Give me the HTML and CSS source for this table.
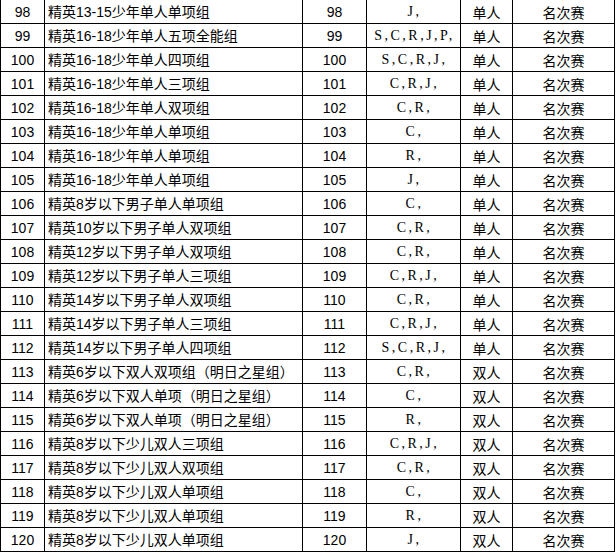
FILE: index.html
```html
<!DOCTYPE html>
<html lang="zh-CN">
<head>
<meta charset="utf-8">
<title>项目列表</title>
<link rel="stylesheet" href="styles.css">
</head>
<body>
<table class="grid">
<colgroup>
<col class="c-no"><col class="c-name"><col class="c-code"><col class="c-items"><col class="c-type"><col class="c-kind">
</colgroup>
<tbody>
<tr><td class="num">98</td><td class="name">精英13-15少年单人单项组</td><td class="num">98</td><td class="items">J,</td><td class="cn">单人</td><td class="cn">名次赛</td></tr>
<tr><td class="num">99</td><td class="name">精英16-18少年单人五项全能组</td><td class="num">99</td><td class="items">S,C,R,J,P,</td><td class="cn">单人</td><td class="cn">名次赛</td></tr>
<tr><td class="num">100</td><td class="name">精英16-18少年单人四项组</td><td class="num">100</td><td class="items">S,C,R,J,</td><td class="cn">单人</td><td class="cn">名次赛</td></tr>
<tr><td class="num">101</td><td class="name">精英16-18少年单人三项组</td><td class="num">101</td><td class="items">C,R,J,</td><td class="cn">单人</td><td class="cn">名次赛</td></tr>
<tr><td class="num">102</td><td class="name">精英16-18少年单人双项组</td><td class="num">102</td><td class="items">C,R,</td><td class="cn">单人</td><td class="cn">名次赛</td></tr>
<tr><td class="num">103</td><td class="name">精英16-18少年单人单项组</td><td class="num">103</td><td class="items">C,</td><td class="cn">单人</td><td class="cn">名次赛</td></tr>
<tr><td class="num">104</td><td class="name">精英16-18少年单人单项组</td><td class="num">104</td><td class="items">R,</td><td class="cn">单人</td><td class="cn">名次赛</td></tr>
<tr><td class="num">105</td><td class="name">精英16-18少年单人单项组</td><td class="num">105</td><td class="items">J,</td><td class="cn">单人</td><td class="cn">名次赛</td></tr>
<tr><td class="num">106</td><td class="name">精英8岁以下男子单人单项组</td><td class="num">106</td><td class="items">C,</td><td class="cn">单人</td><td class="cn">名次赛</td></tr>
<tr><td class="num">107</td><td class="name">精英10岁以下男子单人双项组</td><td class="num">107</td><td class="items">C,R,</td><td class="cn">单人</td><td class="cn">名次赛</td></tr>
<tr><td class="num">108</td><td class="name">精英12岁以下男子单人双项组</td><td class="num">108</td><td class="items">C,R,</td><td class="cn">单人</td><td class="cn">名次赛</td></tr>
<tr><td class="num">109</td><td class="name">精英12岁以下男子单人三项组</td><td class="num">109</td><td class="items">C,R,J,</td><td class="cn">单人</td><td class="cn">名次赛</td></tr>
<tr><td class="num">110</td><td class="name">精英14岁以下男子单人双项组</td><td class="num">110</td><td class="items">C,R,</td><td class="cn">单人</td><td class="cn">名次赛</td></tr>
<tr><td class="num">111</td><td class="name">精英14岁以下男子单人三项组</td><td class="num">111</td><td class="items">C,R,J,</td><td class="cn">单人</td><td class="cn">名次赛</td></tr>
<tr><td class="num">112</td><td class="name">精英14岁以下男子单人四项组</td><td class="num">112</td><td class="items">S,C,R,J,</td><td class="cn">单人</td><td class="cn">名次赛</td></tr>
<tr><td class="num">113</td><td class="name">精英6岁以下双人双项组（明日之星组）</td><td class="num">113</td><td class="items">C,R,</td><td class="cn">双人</td><td class="cn">名次赛</td></tr>
<tr><td class="num">114</td><td class="name">精英6岁以下双人单项（明日之星组）</td><td class="num">114</td><td class="items">C,</td><td class="cn">双人</td><td class="cn">名次赛</td></tr>
<tr><td class="num">115</td><td class="name">精英6岁以下双人单项（明日之星组）</td><td class="num">115</td><td class="items">R,</td><td class="cn">双人</td><td class="cn">名次赛</td></tr>
<tr><td class="num">116</td><td class="name">精英8岁以下少儿双人三项组</td><td class="num">116</td><td class="items">C,R,J,</td><td class="cn">双人</td><td class="cn">名次赛</td></tr>
<tr><td class="num">117</td><td class="name">精英8岁以下少儿双人双项组</td><td class="num">117</td><td class="items">C,R,</td><td class="cn">双人</td><td class="cn">名次赛</td></tr>
<tr><td class="num">118</td><td class="name">精英8岁以下少儿双人单项组</td><td class="num">118</td><td class="items">C,</td><td class="cn">双人</td><td class="cn">名次赛</td></tr>
<tr><td class="num">119</td><td class="name">精英8岁以下少儿双人单项组</td><td class="num">119</td><td class="items">R,</td><td class="cn">双人</td><td class="cn">名次赛</td></tr>
<tr><td class="num">120</td><td class="name">精英8岁以下少儿双人单项组</td><td class="num">120</td><td class="items">J,</td><td class="cn">双人</td><td class="cn">名次赛</td></tr>
</tbody>
</table>
</body>
</html>
```
FILE: styles.css
```css
html, body {
  margin: 0;
  padding: 0;
  background: #ffffff;
}
body {
  font-family: "Liberation Sans", "Noto Sans CJK SC", sans-serif;
  font-size: 14px;
  color: #000000;
  overflow: hidden;
}
.grid {
  border-collapse: collapse;
  table-layout: fixed;
  width: 615px;
  margin-top: -1px;
}
.c-no { width: 44px; }
.c-name { width: 258px; }
.c-code { width: 64px; }
.c-items { width: 94px; }
.c-type { width: 52px; }
.c-kind { width: 102px; }
.grid td {
  border: 1px solid #000000;
  height: 23px;
  padding: 0;
  line-height: 16px;
  white-space: nowrap;
  overflow: hidden;
  text-align: center;
  vertical-align: middle;
}
.grid td.name {
  text-align: left;
  padding-left: 3px;
  font-family: "Liberation Sans", "Noto Sans CJK SC", sans-serif;
}
.grid td.num {
  font-family: "Liberation Sans", sans-serif;
}
.grid td.items {
  font-family: "Liberation Serif", serif;
  letter-spacing: 2.5px;
  padding-left: 2px;
}
.grid td.cn {
  font-family: "Noto Sans CJK SC", sans-serif;
}
```
